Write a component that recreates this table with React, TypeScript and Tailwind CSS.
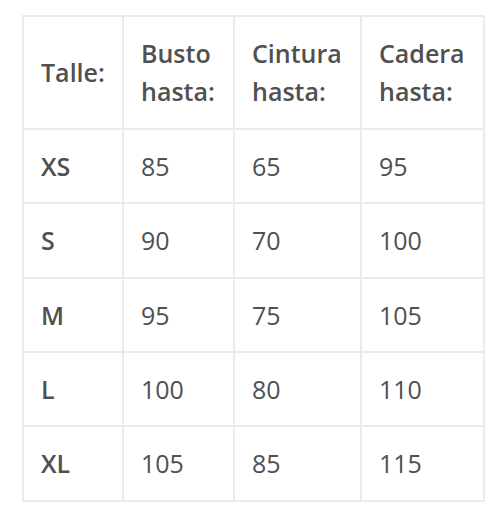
const rows = [
  ['XS', '85', '65', '95'],
  ['S', '90', '70', '100'],
  ['M', '95', '75', '105'],
  ['L', '100', '80', '110'],
  ['XL', '105', '85', '115'],
]

const cell = 'border-2 border-[#ebebeb] px-[17px] py-[17px] text-left align-middle'

export default function App() {
  return (
    <div className="min-h-[514px] w-[502px] bg-white pl-[22px] pt-[15px] font-['Open_Sans',sans-serif] text-[25px] leading-[38.4px] text-[#505050]">
      <table className="table-fixed border-collapse">
        <colgroup>
          <col className="w-[100px]" />
          <col className="w-[111px]" />
          <col className="w-[127px]" />
          <col className="w-[123px]" />
        </colgroup>
        <thead>
          <tr>
            <th className={`${cell} font-semibold`}>Talle:</th>
            <th className={`${cell} font-semibold`}>Busto hasta:</th>
            <th className={`${cell} font-semibold`}>Cintura hasta:</th>
            <th className={`${cell} font-semibold`}>Cadera hasta:</th>
          </tr>
        </thead>
        <tbody>
          {rows.map((r) => (
            <tr key={r[0]}>
              <td className={`${cell} font-semibold`}>{r[0]}</td>
              <td className={cell}>{r[1]}</td>
              <td className={cell}>{r[2]}</td>
              <td className={cell}>{r[3]}</td>
            </tr>
          ))}
        </tbody>
      </table>
    </div>
  )
}
